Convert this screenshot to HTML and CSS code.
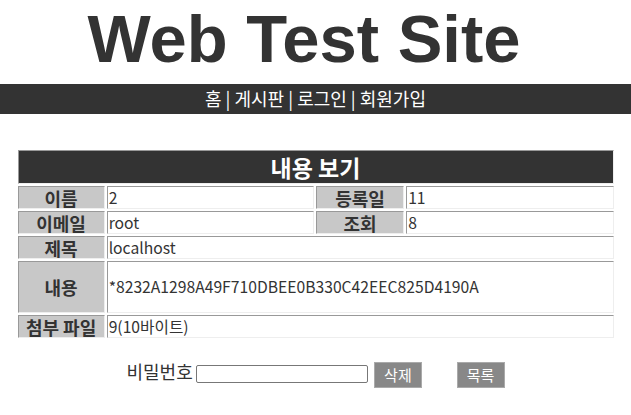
FILE: index.html
```html
<!DOCTYPE html>
<html>
  <head>
    <title>Web Test Site</title>
    <link rel="stylesheet" href="styles.css">
  </head>
  <body>
    <h1 class="site-title">Web Test Site</h1>

    <div class="menu">
      <a href="#">홈</a> | <a href="#">게시판</a> | <a href="#">로그인</a> | <a href="#">회원가입</a>
    </div>

    <table class="view">
      <colgroup>
        <col class="col-label">
        <col class="col-value">
        <col class="col-label2">
        <col class="col-value">
      </colgroup>
      <tr>
        <th colspan="4" class="view-title">내용 보기</th>
      </tr>
      <tr>
        <td class="label">이름</td>
        <td class="value">2</td>
        <td class="label">등록일</td>
        <td class="value">11</td>
      </tr>
      <tr>
        <td class="label">이메일</td>
        <td class="value">root</td>
        <td class="label">조회</td>
        <td class="value">8</td>
      </tr>
      <tr>
        <td class="label">제목</td>
        <td class="value" colspan="3">localhost</td>
      </tr>
      <tr class="tall">
        <td class="label">내용</td>
        <td class="value" colspan="3">*8232A1298A49F710DBEE0B330C42EEC825D4190A</td>
      </tr>
      <tr>
        <td class="label">첨부 파일</td>
        <td class="value" colspan="3">9(10바이트)</td>
      </tr>
    </table>

    <form class="delete-form">
      <span class="pw-label">비밀번호</span> <input type="password" class="pw">
      <button type="button" class="btn">삭제</button>
      <button type="button" class="btn btn-list">목록</button>
    </form>
  </body>
</html>
```

FILE: styles.css
```css
body {
    font-family: "Noto Sans CJK KR", "Noto Sans", sans-serif;
    color: #333;
    margin: 0;
}
.site-title {
    font-family: "Liberation Sans", Arial, sans-serif;
    text-align: center;
    font-size: 67px;
    font-weight: bold;
    margin: 0;
    padding-right: 23px;
    height: 84px;
    line-height: 77px;
}
/* top menu bar */
.menu {
    background: #333;
    color: #fff;
    text-align: center;
    height: 30px;
    line-height: 29px;
    font-size: 18px;
}
.menu a {
    color: #fff;
    text-decoration: none;
}
.view {
    width: 600px;
    margin: 34px auto 0;
    border-spacing: 2px;
    table-layout: fixed;
    font-size: 15.7px;
}
.col-label { width: 87px; }
.col-label2 { width: 88px; }
.col-value { width: 207px; }
.view td, .view th {
    border: 1px solid;
    border-color: #999 #eee #eee #999;
    padding: 0 1px;
    height: 21px;
    line-height: 20px;
    white-space: nowrap;
}
.view-title {
    background: #333;
    color: #fff;
    font-size: 23px;
    height: 32px !important;
    line-height: 30px !important;
}
.label {
    background: #c8c8c8;
    font-weight: bold;
    font-size: 18px;
    text-align: center;
}
.value {
    background: #fff;
}
.tall td {
    height: 50px;
}
.delete-form {
    text-align: center;
    margin-top: 18px;
    font-size: 16px;
}
.pw-label {
    font-size: 18px;
}
.pw {
    width: 166px;
    height: 16px;
    padding: 0 2px;
    border: 1px solid #777;
    border-radius: 2px;
    box-sizing: content-box;
    vertical-align: 1px;
}
.btn {
    background: #888;
    color: #fff;
    border: 1px solid #aaa;
    width: 48px;
    height: 26px;
    font-family: inherit;
    font-size: 15px;
    margin-left: 2px;
    vertical-align: middle;
}
.btn-list {
    margin-left: 31px;
}
```
